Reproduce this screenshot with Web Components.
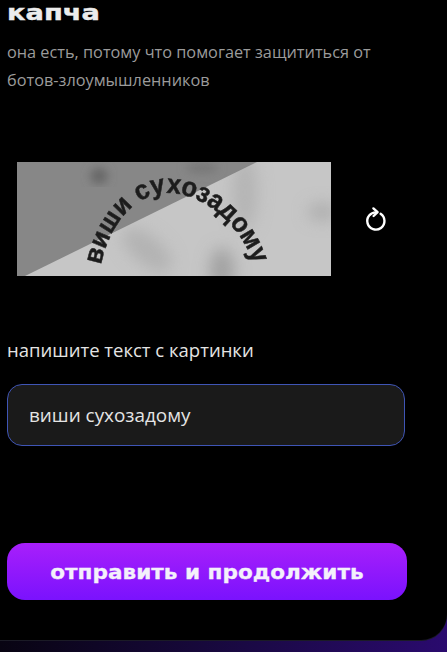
<!DOCTYPE html>
<html lang="ru">
<head>
<meta charset="utf-8">
<title>капча</title>
<style>
  html, body { margin: 0; height: 652px; overflow: hidden; background: #000; }
  body { font-family: "Open Sans", "Noto Sans", sans-serif; }
</style>
</head>
<body>
<captcha-page>
  <captcha-card>
    <span slot="titulo">капча</span>
    <span slot="descripcion">она есть, потому что помогает защититься от ботов-злоумышленников</span>
    <captcha-image slot="imagen"></captcha-image>
    <captcha-field slot="campo" label="напишите текст с картинки" value="виши сухозадому"></captcha-field>
    <gradient-button slot="boton">отправить и продолжить</gradient-button>
  </captcha-card>
</captcha-page>

<script>
class CaptchaPage extends HTMLElement {
    constructor() {
        super();
        this.attachShadow({ mode: 'open' });
        this.shadowRoot.innerHTML = `
      <style>
        :host {
          display: block;
          height: 652px;
          background: linear-gradient(90deg, #080412 0%, #1a0944 55%, #2a0a6e 100%);
        }
      </style>
      <slot></slot>
    `;
    }
}

class CaptchaCard extends HTMLElement {
    constructor() {
        super();
        this.attachShadow({ mode: 'open' });
        this.shadowRoot.innerHTML = `
      <style>
        :host {
          display: block;
          box-sizing: border-box;
          height: 640px;
          padding: 0 0 0 7px;
          background: #000;
          border-bottom-right-radius: 26px;
          box-shadow: 0 1px 0 #1b1b26;
        }
        .titulo {
          font: 700 21.5px "DejaVu Sans", sans-serif;
          -webkit-text-stroke: 0.4px #ececec;
          color: #ececec;
          height: 25px;
          transform: scaleX(1.27);
          transform-origin: left center;
        }
        .descripcion {
          width: 385px;
          margin-top: 13px;
          font-size: 16.3px;
          line-height: 28px;
          color: #9b9b9b;
        }
        .imagen { display: block; margin-top: 68px; }
        .campo { display: block; margin-top: 62px; }
        .boton { display: block; margin-top: 97px; }
      </style>
      <div class="titulo"><slot name="titulo"></slot></div>
      <div class="descripcion"><slot name="descripcion"></slot></div>
      <div class="imagen"><slot name="imagen"></slot></div>
      <div class="campo"><slot name="campo"></slot></div>
      <div class="boton"><slot name="boton"></slot></div>
    `;
    }
}

class CaptchaImage extends HTMLElement {
    constructor() {
        super();
        this.attachShadow({ mode: 'open' });
        this.shadowRoot.innerHTML = `
      <style>
        :host { display: flex; align-items: center; padding-left: 10px; }
        .foto { display: block; width: 314px; height: 114px; }
        .recargar { display: block; width: 26px; height: 26px; margin-left: 32px; }
        text {
          font: 700 27px "Liberation Sans", sans-serif;
          fill: #1e1e1e;
          stroke: #1e1e1e;
          stroke-width: 0.5px;
        }
      </style>
      <svg class="foto" viewBox="0 0 314 114">
        <defs>
          <filter id="b8"><feGaussianBlur stdDeviation="8"/></filter>
          <filter id="b5"><feGaussianBlur stdDeviation="5"/></filter>
          <filter id="b1"><feGaussianBlur stdDeviation="0.7"/></filter>
          <path id="arco" d="M84 103 C 90 70, 115 31, 150 31 C 190 31, 228 68, 238 108 L 260 200"/>
        </defs>
        <rect width="314" height="114" fill="#c6c6c6"/>
        <g filter="url(#b8)">
          <ellipse cx="228" cy="30" rx="12" ry="38" fill="#b4b4b4"/>
          <ellipse cx="130" cy="88" rx="30" ry="14" fill="#b2b2b2" transform="rotate(40 130 88)"/>
          <ellipse cx="205" cy="108" rx="12" ry="22" fill="#a0a0a0"/>
          <ellipse cx="305" cy="50" rx="14" ry="8" fill="#aaa"/>
        </g>
        <polygon points="0,0 240,0 8,114 0,114" fill="#878787"/>
        <g filter="url(#b5)">
          <ellipse cx="82" cy="14" rx="9" ry="8" fill="#666"/>
          <ellipse cx="185" cy="6" rx="16" ry="5" fill="#767676"/>
        </g>
        <g filter="url(#b1)">
          <text><textPath href="#arco" textLength="224" lengthAdjust="spacingAndGlyphs">виши сухозадому</textPath></text>
        </g>
      </svg>
      <svg class="recargar" viewBox="0 0 26 26" fill="none" stroke="#fff" stroke-width="2.4" stroke-linecap="round" stroke-linejoin="round">
        <path d="M17.6 7.8 A 8.6 8.6 0 1 1 13.5 6.4"/>
        <path d="M10.4 2.4 L 14.6 6.2 L 10.6 10"/>
      </svg>
    `;
    }
}

class CaptchaField extends HTMLElement {
    constructor() {
        super();
        this.attachShadow({ mode: 'open' });
        this.shadowRoot.innerHTML = `
      <style>
        :host { display: block; }
        .label {
          font-size: 18.5px;
          line-height: 24px;
          color: #e4e4e4;
        }
        .input {
          box-sizing: border-box;
          width: 398px;
          height: 62px;
          margin-top: 22px;
          padding: 0 21px;
          display: flex;
          align-items: center;
          background: #1a1a1a;
          border: 1px solid #3f55b5;
          border-radius: 15px;
          font-size: 18.9px;
          color: #e4e4e4;
        }
      </style>
      <div class="label"></div>
      <div class="input"></div>
    `;
    }

    connectedCallback() {
        this.shadowRoot.querySelector('.label').textContent = this.getAttribute('label');
        this.shadowRoot.querySelector('.input').textContent = this.getAttribute('value');
    }
}

class GradientButton extends HTMLElement {
    constructor() {
        super();
        this.attachShadow({ mode: 'open' });
        this.shadowRoot.innerHTML = `
      <style>
        :host {
          display: flex;
          align-items: center;
          justify-content: center;
          width: 400px;
          height: 57px;
          border-radius: 18px;
          background: linear-gradient(180deg, #a81ffb 0%, #7a12fd 100%);
          color: #f4f0fb;
          font: 700 19px "DejaVu Sans", sans-serif;
          -webkit-text-stroke: 0.3px #f4f0fb;
        }
        span { display: inline-block; transform: scaleX(1.136); white-space: nowrap; }
      </style>
      <span><slot></slot></span>
    `;
    }
}

customElements.define('captcha-page', CaptchaPage);
customElements.define('captcha-card', CaptchaCard);
customElements.define('captcha-image', CaptchaImage);
customElements.define('captcha-field', CaptchaField);
customElements.define('gradient-button', GradientButton);
</script>
</body>
</html>
